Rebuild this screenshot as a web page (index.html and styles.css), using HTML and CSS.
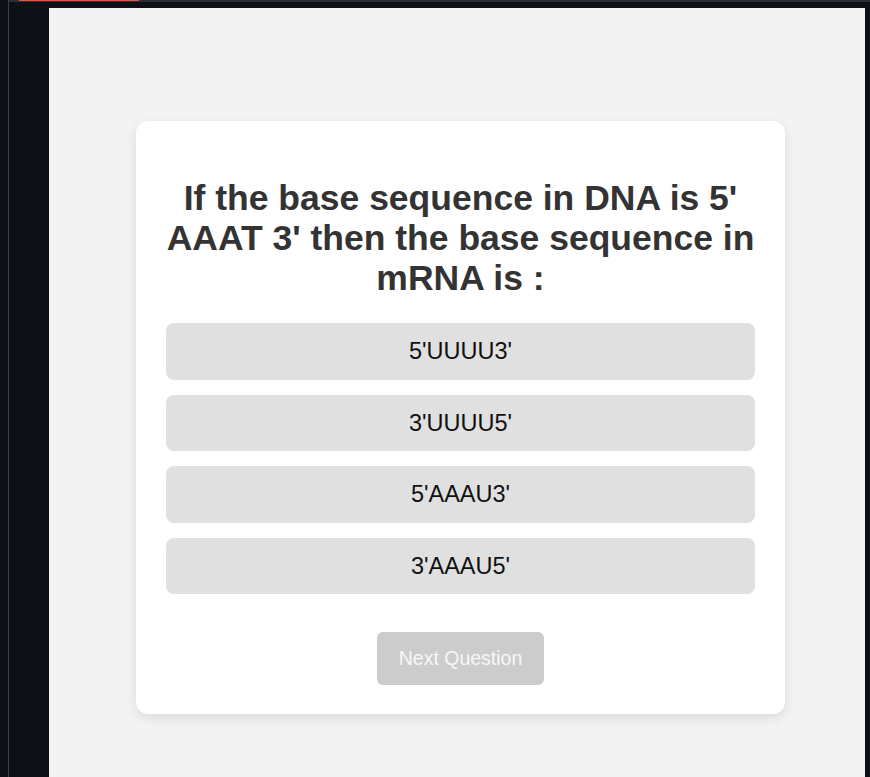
FILE: index.html
```html
<!DOCTYPE html>
<html lang="en">
<head>
<meta charset="utf-8">
<title>Quiz</title>
<link rel="stylesheet" href="styles.css">
</head>
<body>
<div class="topbar"><div class="tab-accent"></div></div>
<div class="shell">
  <div class="rail"></div>
  <div class="panel">
    <div class="card">
      <h2 class="question">If the base sequence in DNA is 5' AAAT 3' then the base sequence in mRNA is :</h2>
      <div class="options">
        <button class="option">5'UUUU3'</button>
        <button class="option">3'UUUU5'</button>
        <button class="option">5'AAAU3'</button>
        <button class="option">3'AAAU5'</button>
      </div>
      <div class="actions">
        <button class="next" disabled>Next Question</button>
      </div>
    </div>
  </div>
</div>
</body>
</html>
```

FILE: styles.css
```css
html, body {
  margin: 0;
  padding: 0;
  height: 100%;
  overflow: hidden;
}
body {
  background: #0d1117;
  font-family: "Liberation Sans", Arial, sans-serif;
}
.topbar {
  position: absolute;
  top: 0;
  left: 9px;
  right: 0;
  height: 2px;
  background: #2b3038;
}
.tab-accent {
  margin-left: 10px;
  width: 120px;
  height: 1px;
  background: #d2604a;
}
.shell {
  display: flex;
  height: 100%;
}
.rail {
  width: 1px;
  margin-left: 8px;
  background: #3b4048;
  flex: none;
}
.panel {
  margin-left: 40px;
  margin-top: 8px;
  width: 816px;
  flex: none;
  background: #f3f3f3;
  padding: 113px 0 0 87px;
  box-sizing: border-box;
}
.card {
  width: 649px;
  box-sizing: border-box;
  background: #fff;
  border-radius: 12px;
  box-shadow: 0 4px 12px rgba(0, 0, 0, 0.1);
  padding: 30px 30px 29px;
}
.question {
  margin: 27px 0 25px;
  font-size: 35.5px;
  line-height: 40px;
  font-weight: bold;
  color: #333;
  text-align: center;
}
.options {
  display: flex;
  flex-direction: column;
  gap: 15px;
}
.option {
  display: block;
  width: 100%;
  border: none;
  border-radius: 8px;
  background: #e0e0e0;
  font-family: "Liberation Sans", Arial, sans-serif;
  font-size: 23.5px;
  line-height: 26.5px;
  padding: 15px 0;
  color: #111;
  text-align: center;
}
.actions {
  display: flex;
  justify-content: center;
  margin-top: 38px;
}
.next {
  border: none;
  border-radius: 6px;
  background: #cccccc;
  color: #f7f7f7;
  font-family: "Liberation Sans", Arial, sans-serif;
  font-size: 19.5px;
  line-height: 23px;
  padding: 15px 22px;
}
```
